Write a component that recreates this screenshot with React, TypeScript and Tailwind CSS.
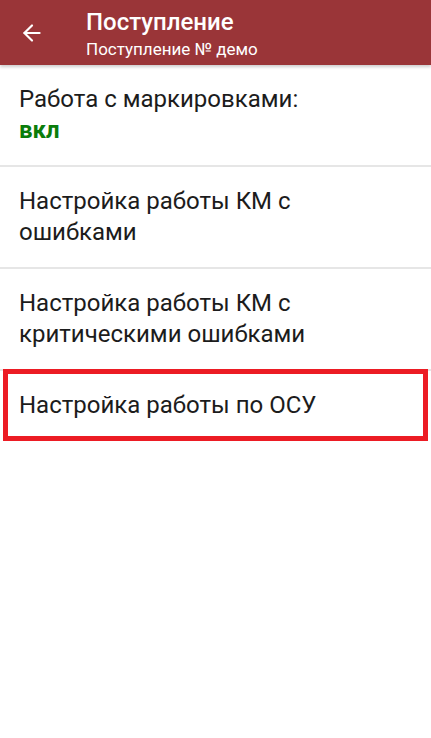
import { ArrowLeft } from 'lucide-react';

const rows = [
    { title: 'Работа с маркировками:', value: 'вкл' },
    { title: 'Настройка работы КМ с ошибками' },
    { title: 'Настройка работы КМ с критическими ошибками' },
];

const App = () => {
    return (
        <div className="min-h-[738px] w-[431px] bg-white font-['Roboto',sans-serif] text-[#1c1c1c]">
            {/* toolbar */}
            <div className="relative z-10 flex h-[65px] bg-[#9a3538] shadow-[0_2px_3px_rgba(0,0,0,0.2)]">
                <div className="flex w-[86px] items-center justify-center pr-[22px]">
                    <ArrowLeft size={26} strokeWidth={2} className="text-white" />
                </div>
                <div className="flex flex-col pt-[8px] text-white">
                    <span className="text-[24px] leading-[28px] font-medium">Поступление</span>
                    <span className="mt-[3px] text-[17px] leading-[20px]">Поступление № демо</span>
                </div>
            </div>

            {rows.map((row) => (
                <div key={row.title} className="border-b-2 border-[#e6e6e6]">
                    <div className="px-[19px] py-[19px] text-[24px] leading-[31px]">
                        <p>{row.title}</p>
                        {row.value && <p className="font-bold text-[#0b7d0b]">{row.value}</p>}
                    </div>
                </div>
            ))}

            <div className="relative">
                <div className="px-[19px] py-[19px] text-[24px] leading-[31px]">
                    <p>Настройка работы по ОСУ</p>
                </div>
                <div className="absolute top-[-2px] left-[3px] h-[72px] w-[425px] border-[5px] border-[#ec1c24]" />
            </div>
        </div>
    );
};

export default App;
